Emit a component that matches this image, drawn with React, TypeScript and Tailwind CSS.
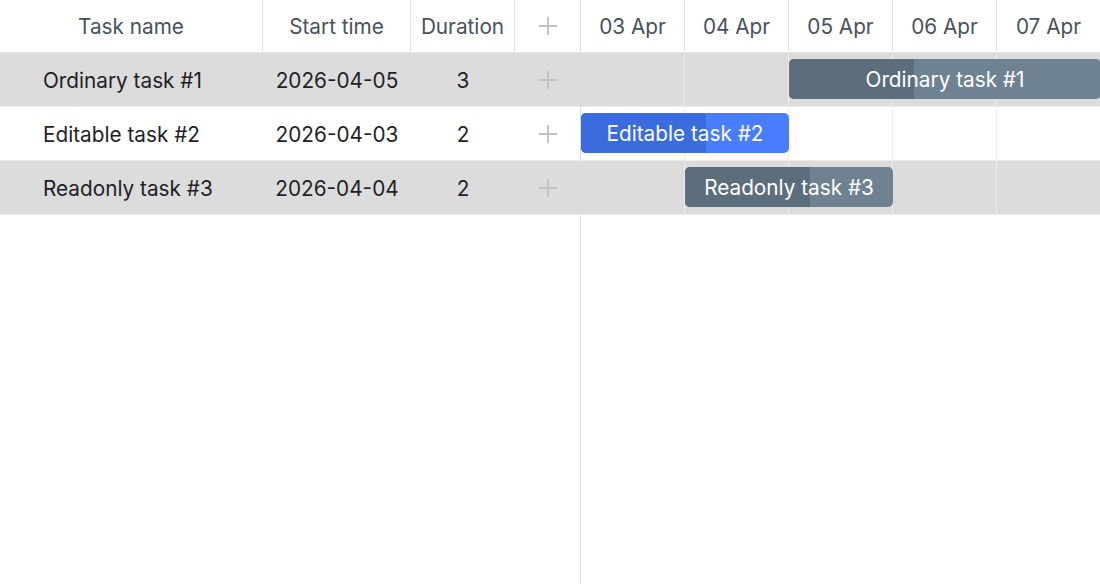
import React from "react";

const PlusIcon = () => (
  <svg width="20" height="20" viewBox="0 0 20 20" className="block">
    <path d="M10 1v18M1 10h18" stroke="#c4c4c4" strokeWidth="2" />
  </svg>
);

const rows = [
  { name: "Ordinary task #1", start: "2026-04-05", dur: "3", gray: true, left: 208, width: 312, progress: 0.4, kind: "slate" },
  { name: "Editable task #2", start: "2026-04-03", dur: "2", gray: false, left: 0, width: 208, progress: 0.6, kind: "blue" },
  { name: "Readonly task #3", start: "2026-04-04", dur: "2", gray: true, left: 104, width: 208, progress: 0.6, kind: "slate" },
];

const days = ["03 Apr", "04 Apr", "05 Apr", "06 Apr", "07 Apr"];

export default function App() {
  return (
    <div
      className="w-[1100px] h-[584px] bg-white flex overflow-hidden"
      style={{ fontFamily: "Inter, 'Noto Sans', sans-serif" }}
    >
      {/* Grid */}
      <div className="w-[581px] shrink-0 flex flex-col border-r border-[#dcdcdc] h-full">
        <div className="h-[53px] flex border-b border-[#e4e4e4] text-[20.75px] text-[#48525c] pt-[2px]">
          <div className="w-[263px] flex items-center justify-center border-r border-[#e4e4e4] -mt-[2px] pt-[2px]">Task name</div>
          <div className="w-[148px] flex items-center justify-center border-r border-[#e4e4e4] -mt-[2px] pt-[2px]">Start time</div>
          <div className="w-[104px] flex items-center justify-center border-r border-[#e4e4e4] -mt-[2px] pt-[2px]">Duration</div>
          <div className="flex-1 flex items-center justify-center -mt-[2px]"><PlusIcon /></div>
        </div>
        {rows.map((r) => (
          <div
            key={r.name}
            className={`h-[54px] flex border-b border-[#ececec] text-[20.75px] text-[#1e2227] pt-[3px] ${r.gray ? "bg-[#dcdcdc]" : "bg-white"}`}
          >
            <div className="w-[263px] flex items-center pl-[43px]">{r.name}</div>
            <div className="w-[148px] flex items-center justify-center">{r.start}</div>
            <div className="w-[104px] flex items-center justify-center">{r.dur}</div>
            <div className="flex-1 flex items-center justify-center -mt-[3px]"><PlusIcon /></div>
          </div>
        ))}
      </div>
      {/* Timeline */}
      <div className="flex-1 flex flex-col overflow-hidden">
        <div className="h-[53px] flex border-b border-[#e4e4e4] text-[20.75px] text-[#48525c] shrink-0">
          {days.map((d) => (
            <div key={d} className="w-[104px] shrink-0 flex items-center justify-center border-r border-[#e4e4e4] pt-[2px]">
              {d}
            </div>
          ))}
        </div>
        {rows.map((r) => (
          <div
            key={r.name}
            className={`relative h-[54px] flex border-b border-[#ececec] shrink-0 ${r.gray ? "bg-[#dcdcdc]" : "bg-white"}`}
          >
            {days.map((d) => (
              <div key={d} className="w-[104px] shrink-0 border-r border-[#ececec]" />
            ))}
            <div
              className={`absolute top-[6px] h-[40px] rounded-[5px] overflow-hidden flex items-center justify-center text-white text-[20.75px] pt-[2px] ${r.kind === "blue" ? "bg-[#4a7cff]" : "bg-[#6e8292]"}`}
              style={{ left: r.left, width: r.width }}
            >
              <div
                className={`absolute left-0 top-0 bottom-0 ${r.kind === "blue" ? "bg-[#3a6cdd]" : "bg-[#5c6e7c]"}`}
                style={{ width: r.width * r.progress }}
              />
              <span className="relative">{r.name}</span>
            </div>
          </div>
        ))}
      </div>
    </div>
  );
}
